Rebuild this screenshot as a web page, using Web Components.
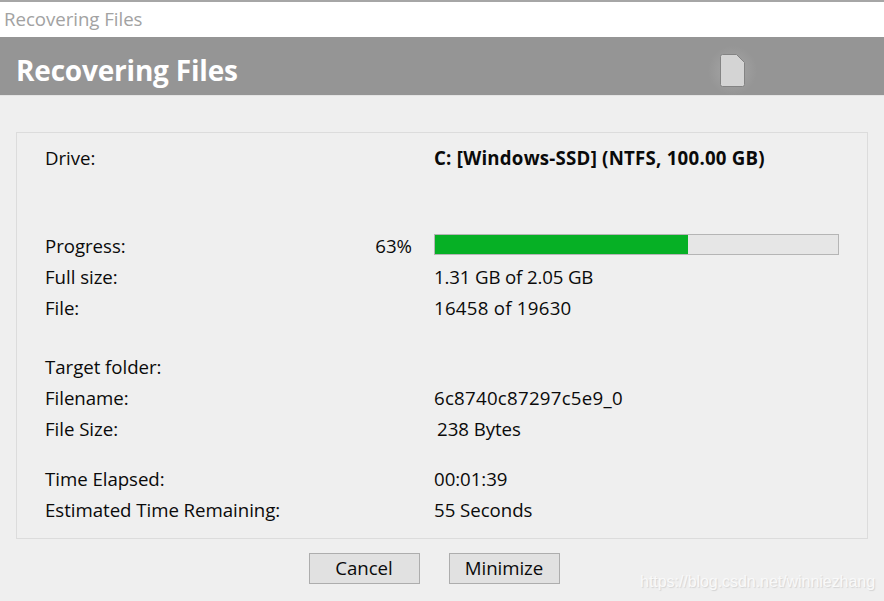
<!DOCTYPE html>
<html><head><meta charset="utf-8"><style>
html,body{margin:0;padding:0;background:#efefef;overflow:hidden}
body{width:884px;height:601px;font-family:"Open Sans","Noto Sans",sans-serif;color:#0a0a0a}
</style></head><body>
<recovery-window></recovery-window>
<script>
class TitleBar extends HTMLElement{constructor(){super();this.attachShadow({mode:'open'}).innerHTML=`<style>
:host{display:flex;align-items:center;box-sizing:border-box;height:37px;background:#fff;border-top:2px solid #a6a6a6;padding:0 0 2px 4px;font-size:18.67px;letter-spacing:-.04px;color:#a2a2a2}
</style><slot></slot>`}}
class BannerBar extends HTMLElement{constructor(){super();this.attachShadow({mode:'open'}).innerHTML=`<style>
:host{display:flex;align-items:center;justify-content:space-between;box-sizing:border-box;height:59px;background:#959595;border-bottom:1px solid #e4e4e4;padding:8px 127px 0 16px;color:#fff;font-size:28px;font-weight:700;letter-spacing:-.2px}
.ic{display:flex;align-self:flex-start;width:49px;height:49px;margin-top:1px;align-items:center;justify-content:center;background:radial-gradient(closest-side,#9f9f9f 45%,#959595 100%)}
</style><slot></slot><span class="ic"><svg width="25" height="33" viewBox="0 0 25 33"><path d="M2.5 .5H16.5L24.5 8.5V30.5a2 2 0 0 1-2 2H2.5a2 2 0 0 1-2-2V2.5a2 2 0 0 1 2-2Z" fill="#d4d4d4" stroke="#838383" stroke-width="1"/></svg></span>`}}
class InfoRow extends HTMLElement{constructor(){super();this.attachShadow({mode:'open'})}
connectedCallback(){const g=this.getAttribute('gap')||0,p=this.getAttribute('pct')||'',l=this.getAttribute('label')||'';
this.shadowRoot.innerHTML=`<style>
:host{display:grid;grid-template-columns:306px 39px 1fr;column-gap:22px;align-items:center;height:31px;margin-top:${g}px;font-size:18.67px;letter-spacing:-.04px;white-space:nowrap}
.pct{text-align:right;white-space:nowrap}
.lab{grid-column:1}
.val{grid-column:3;min-width:0}
</style><span class="lab">${l}</span><span class="pct">${p}</span><span class="val"><slot></slot></span>`}}
class ProgressMeter extends HTMLElement{constructor(){super();this.attachShadow({mode:'open'}).innerHTML=`<style>
:host{display:block;box-sizing:border-box;width:405px;height:21px;background:#e6e6e6;border:1px solid #b5b5b5;margin-top:-3px}
.f{display:block;height:100%;background:#06b025}
</style><span class="f" style="width:${this.getAttribute('value')}%"></span>`}}
class ActionButton extends HTMLElement{constructor(){super();this.attachShadow({mode:'open'}).innerHTML=`<style>
:host{display:flex;align-items:center;justify-content:center;box-sizing:border-box;width:111px;height:31px;padding-bottom:2px;background:#e1e1e1;border:1px solid #adadad;font-size:18.67px;letter-spacing:-.04px;color:#0a0a0a}
</style><slot></slot>`}}
class RecoveryWindow extends HTMLElement{constructor(){super();this.attachShadow({mode:'open'}).innerHTML=`<style>
:host{display:block;position:relative;width:884px;height:601px;background:#efefef}
.panel{box-sizing:border-box;margin:36px 16px 0;height:407px;border:1px solid #dcdcdc;padding:9px 28px 0}
.btns{display:flex;justify-content:center;gap:29px;margin:14px 0 0;padding-right:16px}
.wm{position:absolute;right:9px;top:573px;font:16px "Liberation Sans",sans-serif;color:#f9f9f9;text-shadow:1px 1px 1px #d4d4d4;letter-spacing:-.05px}
b{font-weight:700;letter-spacing:.23px}
.i{padding-left:3px}
.n{letter-spacing:.26px}
.m{letter-spacing:-.15px}
</style>
<title-bar>Recovering Files</title-bar>
<banner-bar>Recovering Files</banner-bar>
<div class="panel">
<info-row label="Drive:"><b>C: [Windows-SSD] (NTFS, 100.00 GB)</b></info-row>
<info-row label="Progress:" pct="63%" gap="57"><progress-meter value="62.8"></progress-meter></info-row>
<info-row label="Full size:"><span class="m">1.31 GB of 2.05 GB</span></info-row>
<info-row label="File:"><span class="n">16458 of 19630</span></info-row>
<info-row label="Target folder:" gap="28"></info-row>
<info-row label="Filename:"><span class="n">6c8740c87297c5e9_0</span></info-row>
<info-row label="File Size:"><span class="i">238 Bytes</span></info-row>
<info-row label="Time Elapsed:" gap="19">00:01:39</info-row>
<info-row label="Estimated Time Remaining:">55 Seconds</info-row>
</div>
<div class="btns"><action-button>Cancel</action-button><action-button>Minimize</action-button></div>
<div class="wm">https://blog.csdn.net/winniezhang</div>`}}
customElements.define('title-bar',TitleBar);
customElements.define('banner-bar',BannerBar);
customElements.define('info-row',InfoRow);
customElements.define('progress-meter',ProgressMeter);
customElements.define('action-button',ActionButton);
customElements.define('recovery-window',RecoveryWindow);
</script>
</body></html>
